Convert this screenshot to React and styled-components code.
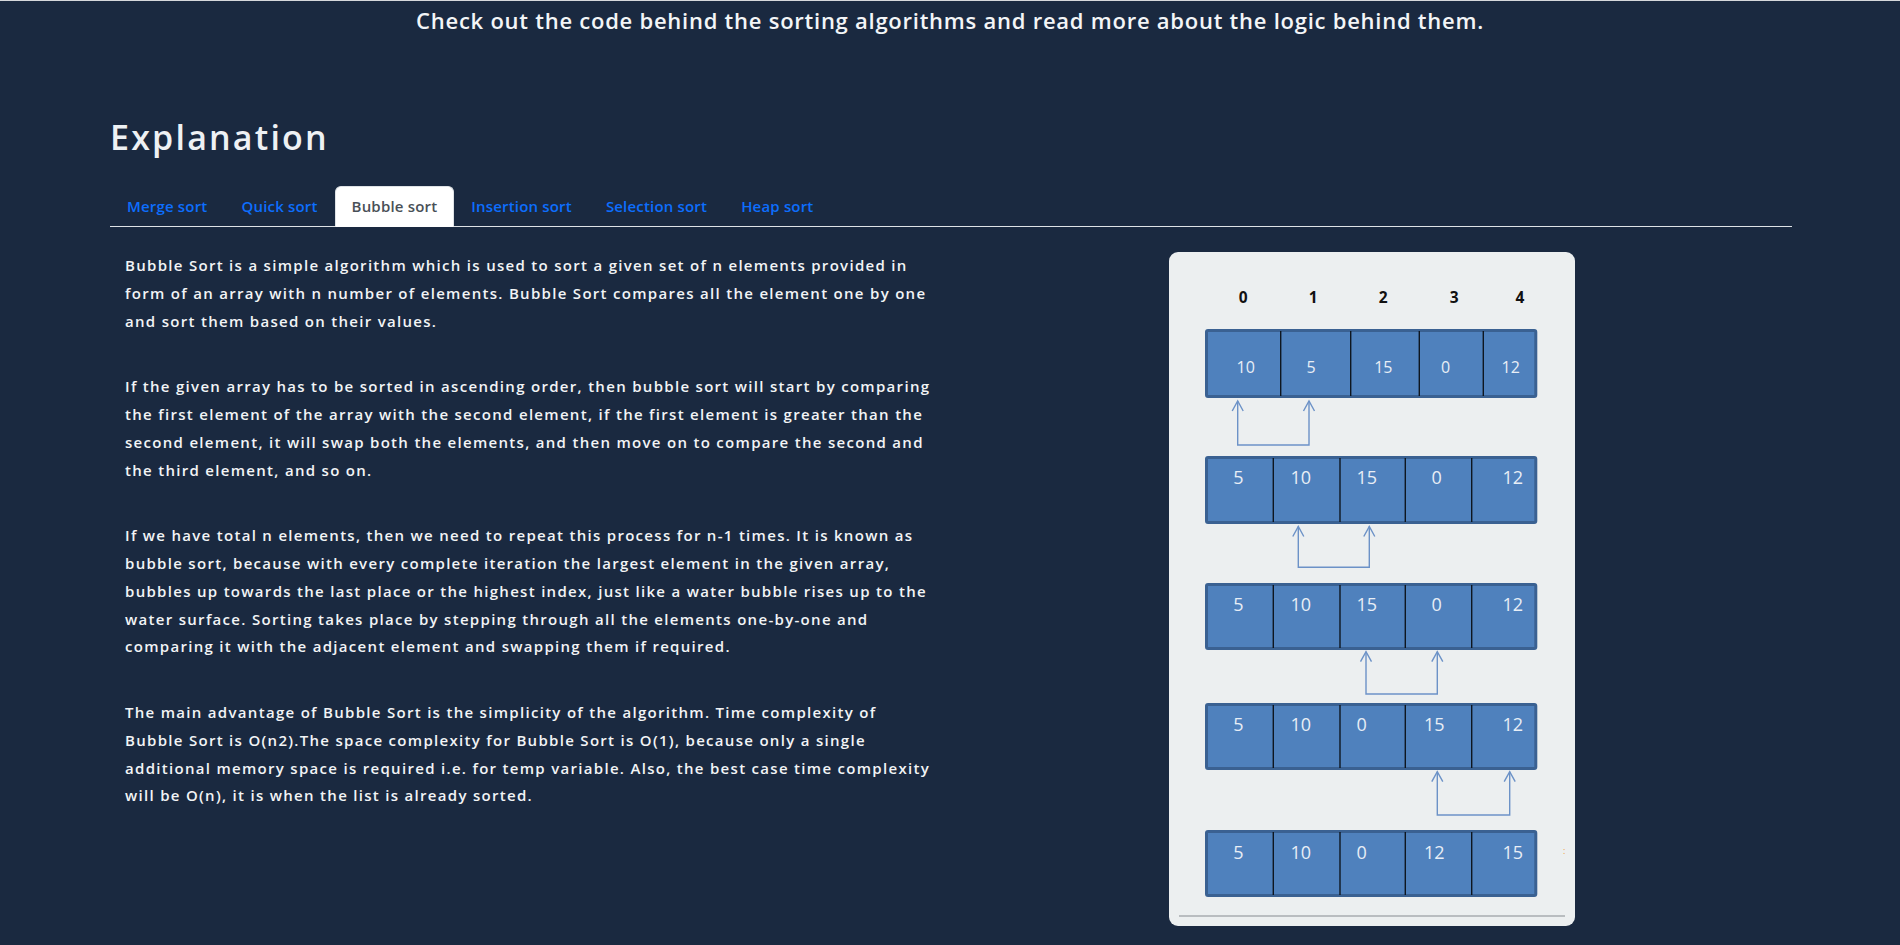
import React from "react";
import styled, { createGlobalStyle } from "styled-components";

const GlobalStyle = createGlobalStyle`
  html, body {
    margin: 0;
    padding: 0;
    background: #1a2940;
  }
  body {
    font-family: "Open Sans", "Noto Sans", sans-serif;
    color: #f1f3f5;
  }
  * {
    box-sizing: border-box;
  }
`;

// layout

const Page = styled.div`
  min-height: 100vh;
  border-top: 1px solid #d6d8db;
  background: #1a2940;
`;

const Tagline = styled.h3`
  margin: 0;
  padding-top: 4px;
  text-align: center;
  font-size: 22px;
  line-height: 30px;
  font-weight: 600;
  letter-spacing: 0.75px;
  color: #f3f5f7;
`;

const Section = styled.section`
  padding: 82px 108px 0 110px;
`;

const Title = styled.h2`
  margin: 0 0 28px;
  font-size: 34px;
  line-height: 41px;
  font-weight: 600;
  letter-spacing: 2.2px;
  color: #eef1f4;
`;

const TabList = styled.ul`
  display: flex;
  margin: 0;
  padding: 0;
  list-style: none;
  border-bottom: 1px solid #dee2e6;
`;

const Tab = styled.li`
  margin-bottom: -1px;
  padding: 8px 16px;
  border: 1px solid transparent;
  border-radius: 6px 6px 0 0;
  font-size: 15px;
  line-height: 23px;
  font-weight: 600;
  letter-spacing: 0.18px;
  cursor: pointer;
  color: ${(p) => (p.$active ? "#495057" : "#0d6efd")};
  background: ${(p) => (p.$active ? "#ffffff" : "transparent")};
  border-color: ${(p) => (p.$active ? "#dee2e6 #dee2e6 #fff" : "transparent")};
`;

const Row = styled.div`
  display: grid;
  grid-template-columns: 1fr 1fr;
  margin-top: 25px;
`;

const TextCol = styled.div`
  padding: 0 15px;
`;

const Para = styled.p`
  margin: 0 0 38px;
  font-size: 15px;
  line-height: 27.75px;
  font-weight: 600;
  letter-spacing: 1.3px;
  color: #f2f4f6;
`;

const ImageCol = styled.div`
  display: flex;
  justify-content: center;
  padding: 0 15px;
`;

const Card = styled.div`
  width: 406px;
  height: 674px;
  border-radius: 9px;
  background: #eceff0;
  overflow: hidden;
`;

// diagram data

const rows = [
  {
    y: 77,
    h: 69,
    cuts: [111.7, 181.7, 250.3, 314.3],
    size: 16,
    base: 121,
    cells: [
      [76.7, "10"],
      [142, "5"],
      [214.3, "15"],
      [276.7, "0"],
      [341.7, "12"],
    ],
  },
  {
    y: 204,
    h: 68,
    cuts: [104.3, 171, 236.3, 302.7],
    size: 18,
    base: 232,
    cells: [
      [69.3, "5"],
      [131.7, "10"],
      [197.7, "15"],
      [267.7, "0"],
      [343.7, "12"],
    ],
  },
  {
    y: 331,
    h: 67,
    cuts: [104.3, 171, 236.3, 302.7],
    size: 18,
    base: 358.7,
    cells: [
      [69.3, "5"],
      [131.7, "10"],
      [197.7, "15"],
      [267.7, "0"],
      [343.7, "12"],
    ],
  },
  {
    y: 451,
    h: 67,
    cuts: [104.3, 171, 236.3, 302.7],
    size: 18,
    base: 478.7,
    cells: [
      [69.3, "5"],
      [131.7, "10"],
      [192.7, "0"],
      [265.3, "15"],
      [343.7, "12"],
    ],
  },
  {
    y: 578,
    h: 67,
    cuts: [104.3, 171, 236.3, 302.7],
    size: 18,
    base: 607,
    cells: [
      [69.3, "5"],
      [131.7, "10"],
      [192.7, "0"],
      [265.3, "12"],
      [343.7, "15"],
    ],
  },
];

const swaps = [
  { a: 68.7, b: 140, tip: 149, bottom: 193 },
  { a: 129.3, b: 200.3, tip: 274.5, bottom: 315.3 },
  { a: 197, b: 268.3, tip: 399.7, bottom: 442 },
  { a: 268.3, b: 340.7, tip: 519.7, bottom: 563 },
];

const labels = [74.3, 144.3, 214.3, 285.3, 351];

const SwapArrow = ({ a, b, tip, bottom }) => (
  <g fill="none" stroke="#6c92c7" strokeWidth="1.4">
    <path d={`M${a} ${tip} V${bottom} H${b} V${tip}`} />
    <path d={`M${a - 5.5} ${tip + 10} L${a} ${tip} L${a + 5.5} ${tip + 10}`} />
    <path d={`M${b - 5.5} ${tip + 10} L${b} ${tip} L${b + 5.5} ${tip + 10}`} />
  </g>
);

const ArrayRow = ({ y, h, cuts, size, base, cells }) => (
  <g>
    <rect
      x="37.5"
      y={y + 1.5}
      width="329.3"
      height={h - 3}
      rx="1.5"
      fill="#4f81bd"
      stroke="#3a6192"
      strokeWidth="3"
    />
    {cuts.map((cx) => (
      <line key={cx} x1={cx} y1={y + 2} x2={cx} y2={y + h - 2} stroke="#0e1620" strokeWidth="1.4" />
    ))}
    {cells.map(([cx, v]) => (
      <text
        key={cx}
        x={cx}
        y={base}
        textAnchor="middle"
        fontSize={size}
        fill="#e8eef6"
        fontFamily="'Open Sans', sans-serif"
      >
        {v}
      </text>
    ))}
  </g>
);

const SortDiagram = () => (
  <svg width="406" height="674" viewBox="0 0 406 674">
    {labels.map((x, i) => (
      <text
        key={x}
        x={x}
        y="50.5"
        textAnchor="middle"
        fontSize="15.5"
        fontWeight="700"
        fill="#111"
        fontFamily="'Open Sans', sans-serif"
      >
        {i}
      </text>
    ))}
    {rows.map((r) => (
      <ArrayRow key={r.y} {...r} />
    ))}
    {swaps.map((s) => (
      <SwapArrow key={s.tip} {...s} />
    ))}
    <text x="395.3" y="602" fontSize="9" fill="#f0a040" textAnchor="middle">
      :
    </text>
    <line x1="10" y1="664" x2="396" y2="664" stroke="#a9adb0" strokeWidth="1.5" />
  </svg>
);

const tabs = [
  "Merge sort",
  "Quick sort",
  "Bubble sort",
  "Insertion sort",
  "Selection sort",
  "Heap sort",
];

const paragraphs = [
  "Bubble Sort is a simple algorithm which is used to sort a given set of n elements provided in form of an array with n number of elements. Bubble Sort compares all the element one by one and sort them based on their values.",
  "If the given array has to be sorted in ascending order, then bubble sort will start by comparing the first element of the array with the second element, if the first element is greater than the second element, it will swap both the elements, and then move on to compare the second and the third element, and so on.",
  "If we have total n elements, then we need to repeat this process for n-1 times. It is known as bubble sort, because with every complete iteration the largest element in the given array, bubbles up towards the last place or the highest index, just like a water bubble rises up to the water surface. Sorting takes place by stepping through all the elements one-by-one and comparing it with the adjacent element and swapping them if required.",
  "The main advantage of Bubble Sort is the simplicity of the algorithm. Time complexity of Bubble Sort is O(n2).The space complexity for Bubble Sort is O(1), because only a single additional memory space is required i.e. for temp variable. Also, the best case time complexity will be O(n), it is when the list is already sorted.",
];

export default function App() {
  return (
    <>
      <GlobalStyle />
      <Page>
        <Tagline>
          Check out the code behind the sorting algorithms and read more about
          the logic behind them.
        </Tagline>
        <Section>
          <Title>Explanation</Title>
          <TabList>
            {tabs.map((t) => (
              <Tab key={t} $active={t === "Bubble sort"}>
                {t}
              </Tab>
            ))}
          </TabList>
          <Row>
            <TextCol>
              {paragraphs.map((p, i) => (
                <Para key={i}>{p}</Para>
              ))}
            </TextCol>
            <ImageCol>
              <Card>
                <SortDiagram />
              </Card>
            </ImageCol>
          </Row>
        </Section>
      </Page>
    </>
  );
}
